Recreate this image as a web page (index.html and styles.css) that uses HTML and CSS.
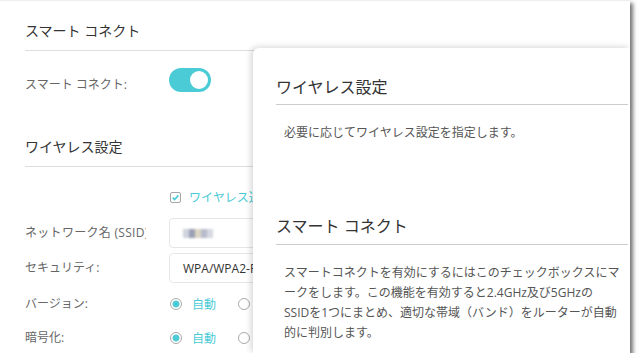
FILE: index.html
```html
<!DOCTYPE html>
<html lang="ja">
<head>
    <meta charset="UTF-8">
    <meta name="viewport" content="width=device-width, initial-scale=1.0">
    <title>ワイヤレス設定</title>
    <link rel="stylesheet" href="styles.css">
</head>
<body>
    <div class="frame">
        <div class="settings">
            <h2 class="section-title">スマート コネクト</h2>
            <div class="row row-toggle">
                <span class="label">スマート コネクト:</span>
                <span class="toggle"><span class="knob"></span></span>
            </div>

            <h2 class="section-title section-gap">ワイヤレス設定</h2>
            <div class="row-check">
                <svg class="checkbox" viewBox="0 0 11 11">
                    <rect x="0.5" y="0.5" width="10" height="10" rx="1.5" fill="#fff" stroke="#a6a6a6"/>
                    <path d="M2.6 5.6l2 2 3.8-4.2" fill="none" stroke="#4acbd6" stroke-width="1.6"/>
                </svg>
                <span class="teal">ワイヤレス通信を有効にする</span>
            </div>
            <div class="row row-field">
                <span class="label label-wide">ネットワーク名 (SSID):</span>
                <div class="input">
                    <span class="ssid-blur">
                        <span style="background:#cfd3de"></span>
                        <span style="background:#9aa0b4"></span>
                        <span style="background:#ddd6c6"></span>
                        <span style="background:#b7bccb"></span>
                        <span style="background:#d6d9e2"></span>
                    </span>
                </div>
            </div>
            <div class="row row-field field-next">
                <span class="label">セキュリティ:</span>
                <div class="input">WPA/WPA2-Personal</div>
            </div>
            <div class="row row-radio radio-first">
                <span class="label">バージョン:</span>
                <div class="radio-group">
                    <span class="radio checked"></span><span class="teal">自動</span>
                    <span class="radio radio-next"></span><span class="option">WPA-PSK</span>
                </div>
            </div>
            <div class="row row-radio">
                <span class="label">暗号化:</span>
                <div class="radio-group">
                    <span class="radio checked"></span><span class="teal">自動</span>
                    <span class="radio radio-next"></span><span class="option">TKIP</span>
                </div>
            </div>
        </div>

        <div class="help">
            <h3 class="help-title">ワイヤレス設定</h3>
            <p class="help-text">必要に応じてワイヤレス設定を指定します。</p>
            <h3 class="help-title help-gap">スマート コネクト</h3>
            <p class="help-text help-para">スマートコネクトを有効にするにはこのチェックボックスにマ<br>ークをします。この機能を有効すると2.4GHz及び5GHzの<br>SSIDを1つにまとめ、適切な帯域（バンド）をルーターが自動<br>的に判別します。</p>
        </div>
    </div>
</body>
</html>
```

FILE: styles.css
```css
body {
    margin: 0;
    background: #fff;
    font-family: "Open Sans", "Noto Sans CJK JP", sans-serif;
}
.frame {
    position: relative;
    width: 630px;
    height: 353px;
    box-sizing: border-box;
    overflow: hidden;
    background: #fff;
    border-top: 1px solid #eee;
    box-shadow: 3px 3px 4px rgba(0, 0, 0, 0.55);
}
.settings {
    padding: 20px 0 0 25px;
}
.section-title {
    width: 420px;
    margin: 0;
    padding-bottom: 9px;
    border-bottom: 1px solid #ddd;
    font-size: 14px;
    font-weight: normal;
    line-height: 20px;
    color: #333;
}
.section-gap {
    margin-top: 42px;
}
.row {
    display: flex;
    align-items: center;
}
.label {
    flex: none;
    width: 121px;
    margin-right: 23px;
    overflow: hidden;
    white-space: nowrap;
    font-size: 12px;
    line-height: 20px;
    color: #666;
}
.label-wide {
    letter-spacing: 0.3px;
}
.row-toggle {
    align-items: flex-start;
    margin-top: 17px;
}
.row-toggle .label {
    margin-top: 7px;
}
.toggle {
    display: flex;
    justify-content: flex-end;
    align-items: center;
    width: 42px;
    height: 24px;
    padding: 0 3px;
    box-sizing: border-box;
    border-radius: 12px;
    background: #4acbd6;
}
.knob {
    width: 18px;
    height: 18px;
    border-radius: 50%;
    background: #fff;
}
.row-check {
    display: flex;
    align-items: center;
    gap: 8px;
    height: 20px;
    margin-top: 20px;
    padding-left: 145px;
    font-size: 12px;
    white-space: nowrap;
}
.checkbox {
    width: 11px;
    height: 11px;
    flex: none;
}
.teal {
    color: #4acbd6;
    font-size: 12px;
    white-space: nowrap;
}
.row-field {
    margin-top: 11px;
}
.field-next {
    margin-top: 5px;
}
.input {
    display: flex;
    align-items: center;
    width: 220px;
    height: 30px;
    padding: 0 13px;
    box-sizing: border-box;
    border: 1px solid #e6e6e6;
    border-radius: 4px;
    font-size: 12px;
    color: #333;
    white-space: nowrap;
}
.ssid-blur {
    display: flex;
    filter: blur(1.2px);
}
.ssid-blur span {
    width: 6px;
    height: 9px;
}
.row-radio {
    height: 34px;
}
.radio-first {
    margin-top: 4px;
}
.radio-group {
    display: flex;
    align-items: center;
    white-space: nowrap;
}
.radio {
    flex: none;
    width: 12px;
    height: 12px;
    box-sizing: border-box;
    margin: 0 10px 0 1px;
    border: 1px solid #aaa;
    border-radius: 50%;
    background: #fff;
}
.radio.checked {
    background: radial-gradient(circle, #4acbd6 0 3.2px, #fff 3.8px);
}
.radio-next {
    margin-left: 22px;
}
.option {
    font-size: 12px;
    color: #666;
}
.help {
    position: absolute;
    top: 47px;
    left: 253px;
    right: 0;
    bottom: 0;
    padding: 29px 2px 0 23px;
    background: #fff;
    border-top-left-radius: 6px;
    box-shadow: -2px -1px 6px rgba(0, 0, 0, 0.16);
}
.help-title {
    margin: 0;
    padding-bottom: 7px;
    border-bottom: 1px solid #ccc;
    font-size: 16px;
    font-weight: normal;
    line-height: 20px;
    color: #333;
}
.help-gap {
    margin-top: 73px;
    padding-bottom: 8px;
}
.help-text {
    margin: 18px 0 0 8px;
    font-size: 12px;
    line-height: 20px;
    color: #555;
    white-space: nowrap;
}
.help-para {
    margin-top: 18px;
}
```
